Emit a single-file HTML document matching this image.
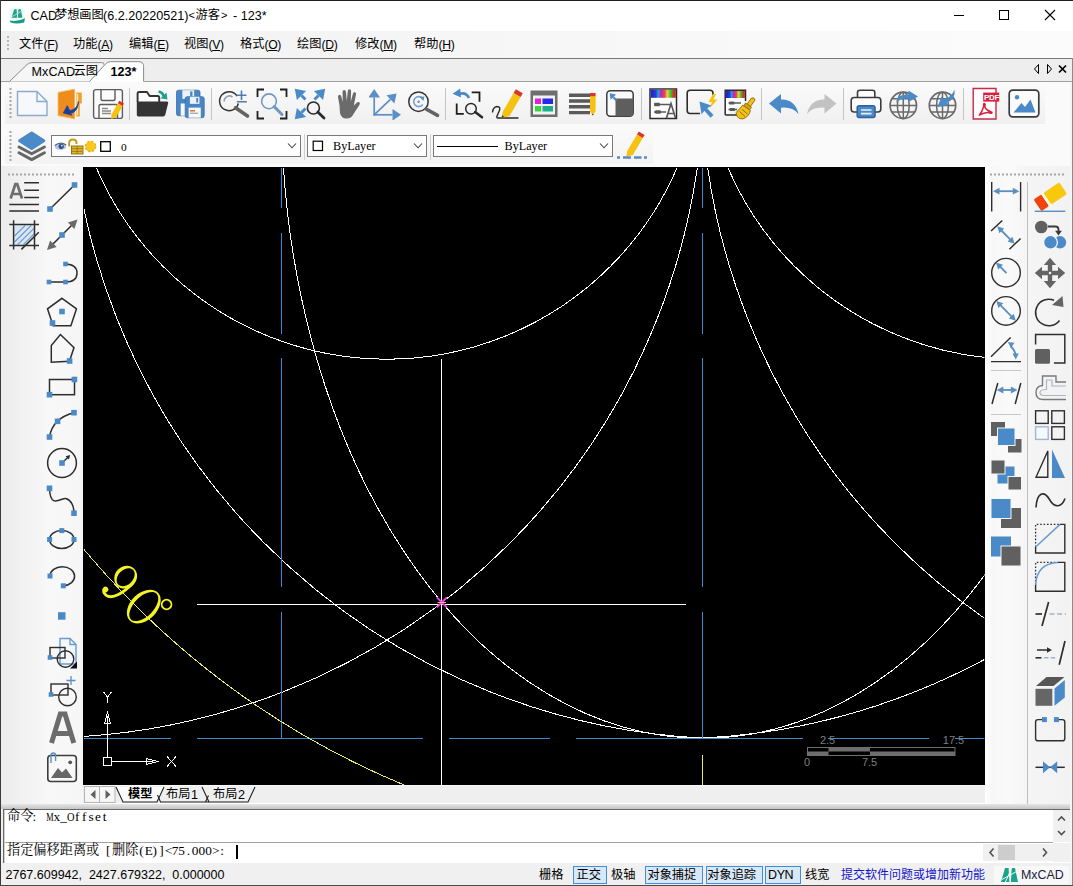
<!DOCTYPE html>
<html><head><meta charset="utf-8"><title>CAD</title><style>
html,body{margin:0;padding:0;}
body{width:1073px;height:886px;overflow:hidden;background:#f0f0f0;position:relative;font-family:"Liberation Sans",sans-serif;}
.b{position:absolute;display:block;}
.t{position:absolute;white-space:pre;}
.z{color:#000;line-height:1;margin-top:1px;pointer-events:none;font-family:"Liberation Sans","Noto Sans CJK SC",sans-serif;}
.zs{font-family:"Liberation Serif","Noto Serif CJK SC",serif;}
</style></head>
<body>
<div class="b" style="left:0px;top:0px;width:1073px;height:886px;background:#f0f0f0;"></div>
<div class="b" style="left:0px;top:0px;width:1073px;height:31px;background:#ffffff;"></div>
<div class="b" style="left:0px;top:31px;width:1073px;height:27px;background:linear-gradient(to right,#f0f0f0,#f6f6f6 40%,#fbfbfb);"></div>
<div class="b" style="left:1px;top:58px;width:1072px;height:1px;background:#787878;"></div>
<div class="b" style="left:1px;top:59px;width:1071px;height:22px;background:#eeeeee;"></div>
<div class="b" style="left:1px;top:81px;width:1071px;height:1px;background:#a0a0a0;"></div>
<div class="b" style="left:1px;top:82px;width:1071px;height:84px;background:#f5f5f5;"></div>
<svg class="b" style="left:83px;top:167px;background:#000;overflow:hidden;" width="901.5" height="618" viewBox="0 0 901.5 618"><clipPath id="cv"><rect x="1" y="1" width="900.5" height="617"/></clipPath><g clip-path="url(#cv)"><circle cx="303.7" cy="-123.7" r="315.9" stroke="#ffffff" stroke-width="1" fill="none" shape-rendering="crispEdges"/><circle cx="935.3" cy="-123.7" r="315.9" stroke="#ffffff" stroke-width="1" fill="none" shape-rendering="crispEdges"/><clipPath id="cl"><rect x="0" y="0" width="619.5" height="618"/></clipPath><clipPath id="cr"><rect x="619.5" y="0" width="282.0" height="618"/></clipPath><g clip-path="url(#cl)"><circle cx="-42.5" cy="-92.5" r="663.3" stroke="#ffffff" stroke-width="1" fill="none" shape-rendering="crispEdges"/><circle cx="653.1" cy="-94.3" r="666.2" stroke="#ffffff" stroke-width="1" fill="none" shape-rendering="crispEdges"/></g><g clip-path="url(#cr)"><circle cx="1281.5" cy="-92.5" r="663.3" stroke="#ffffff" stroke-width="1" fill="none" shape-rendering="crispEdges"/><circle cx="585.9" cy="-94.3" r="666.2" stroke="#ffffff" stroke-width="1" fill="none" shape-rendering="crispEdges"/></g><ellipse cx="619.5" cy="-62.2" rx="421.1" ry="633.5" stroke="#ffffff" stroke-width="1" fill="none" shape-rendering="crispEdges"/><path d="M358.5,192.0 L358.5,619.0 M113.5,437.3 L603.0,437.3" stroke="#ffffff" stroke-width="1" fill="none" shape-rendering="crispEdges"/><path d="M198.6,-7.0 L198.6,40.5" stroke="#3a8ad4" stroke-width="1" fill="none" shape-rendering="crispEdges"/><path d="M198.6,65.7 L198.6,167.2" stroke="#3a8ad4" stroke-width="1" fill="none" shape-rendering="crispEdges"/><path d="M198.6,191.4 L198.6,420.2" stroke="#3a8ad4" stroke-width="1" fill="none" shape-rendering="crispEdges"/><path d="M198.6,445.0 L198.6,571.3" stroke="#3a8ad4" stroke-width="1" fill="none" shape-rendering="crispEdges"/><path d="M619.5,-7.0 L619.5,40.5" stroke="#3a8ad4" stroke-width="1" fill="none" shape-rendering="crispEdges"/><path d="M619.5,65.7 L619.5,167.2" stroke="#3a8ad4" stroke-width="1" fill="none" shape-rendering="crispEdges"/><path d="M619.5,191.4 L619.5,420.2" stroke="#3a8ad4" stroke-width="1" fill="none" shape-rendering="crispEdges"/><path d="M619.5,445.0 L619.5,571.3" stroke="#3a8ad4" stroke-width="1" fill="none" shape-rendering="crispEdges"/><path d="M-3.0,571.3 L88.0,571.3" stroke="#3a8ad4" stroke-width="1" fill="none" shape-rendering="crispEdges"/><path d="M113.5,571.3 L340.4,571.3" stroke="#3a8ad4" stroke-width="1" fill="none" shape-rendering="crispEdges"/><path d="M365.8,571.3 L467.0,571.3" stroke="#3a8ad4" stroke-width="1" fill="none" shape-rendering="crispEdges"/><path d="M492.7,571.3 L719.6,571.3" stroke="#3a8ad4" stroke-width="1" fill="none" shape-rendering="crispEdges"/><path d="M745.0,571.3 L846.0,571.3" stroke="#3a8ad4" stroke-width="1" fill="none" shape-rendering="crispEdges"/><path d="M871.6,571.3 L907.0,571.3" stroke="#3a8ad4" stroke-width="1" fill="none" shape-rendering="crispEdges"/><path d="M619.5,588.0 L619.5,619.0" stroke="#ecec50" stroke-width="1" shape-rendering="crispEdges"/><circle cx="640.7" cy="-151.6" r="833.3" stroke="#ecec70" stroke-width="1" fill="none" shape-rendering="crispEdges"/><g transform="translate(60.8,439.6) rotate(45)" fill="none" stroke="#f4f424"><path fill-rule="evenodd" fill="#f4f424" stroke="none" d="M0,-19.8 C8,-19.8 13.4,-10 13.4,0 C13.4,10 8,19.8 0,19.8 C-8,19.8 -13.4,10 -13.4,0 C-13.4,-10 -8,-19.8 0,-19.8 Z M0,-18.1 C-5.4,-18.1 -9.8,-9.5 -9.8,0 C-9.8,9.5 -5.4,18.1 0,18.1 C5.4,18.1 9.8,9.5 9.8,0 C9.8,-9.5 5.4,-18.1 0,-18.1 Z"/><path fill-rule="evenodd" fill="#f4f424" stroke="none" d="M-33.6,-20 C-27.5,-20 -22.8,-14.5 -22.8,-8 C-22.8,-1.5 -27.5,4 -33.6,4 C-39.7,4 -44.4,-1.5 -44.4,-8 C-44.4,-14.5 -39.7,-20 -33.6,-20 Z M-33.6,-18.4 C-37.6,-18.4 -41,-13.8 -41,-8 C-41,-2.2 -37.6,2.4 -33.6,2.4 C-29.6,2.4 -26.2,-2.2 -26.2,-8 C-26.2,-13.8 -29.6,-18.4 -33.6,-18.4 Z"/><path d="M-24.2,-8 C-24,4 -27,17.5 -34.5,18.6 C-38,19 -40.5,17.5 -40.2,15.2" stroke-width="2.9" stroke-linecap="round"/><circle cx="-39.2" cy="15" r="2.8" fill="#f4f424" stroke="none"/><circle cx="14.6" cy="-17.6" r="4.8" stroke-width="1.9"/></g><path d="M353.8,430.4 L363.8,440.4 M363.8,430.4 L353.8,440.4" stroke="#f03ce0" stroke-width="2"/><path d="M354.5,435.5 L363.0,435.5" stroke="#f0b080" stroke-width="1"/><rect x="20.5" y="590.5" width="8" height="8" stroke="#ffffff" stroke-width="1" fill="none" shape-rendering="crispEdges"/><path d="M24.5,590.5 L24.5,556.0 M28.5,594.5 L63.0,594.5" stroke="#ffffff" stroke-width="1" fill="none" shape-rendering="crispEdges"/><path d="M24.5,545.5 L21.5,556.5 L27.5,556.5 Z M24.5,549.0 L24.5,556.0" stroke="#ffffff" stroke-width="1" fill="none" shape-rendering="crispEdges"/><path d="M74.5,594.5 L63.0,591.5 L63.0,597.5 Z M70.0,594.5 L63.0,594.5" stroke="#ffffff" stroke-width="1" fill="none" shape-rendering="crispEdges"/><path d="M20.5,525.0 L24.5,530.0 L28.5,525.0 M24.5,530.0 L24.5,536.0" stroke="#ffffff" stroke-width="1" fill="none" shape-rendering="crispEdges"/><path d="M84.0,589.5 L93.0,599.5 M93.0,589.5 L84.0,599.5" stroke="#ffffff" stroke-width="1" fill="none" shape-rendering="crispEdges"/><rect x="724" y="580" width="148.5" height="9" fill="#6e6e6e"/><rect x="725" y="581" width="20.5" height="3.5" fill="#000"/><rect x="745.5" y="584.5" width="41.5" height="3.5" fill="#000"/><rect x="787" y="581" width="84.5" height="3.5" fill="#000"/><text x="744.6" y="577.0" font-family="Liberation Sans" font-size="11" fill="#7e7e7e" text-anchor="middle">2.5</text><text x="870.5" y="577.0" font-family="Liberation Sans" font-size="11" fill="#7e7e7e" text-anchor="middle">17.5</text><text x="724.0" y="599.3" font-family="Liberation Sans" font-size="11" fill="#7e7e7e" text-anchor="middle">0</text><text x="786.6" y="599.3" font-family="Liberation Sans" font-size="11" fill="#7e7e7e" text-anchor="middle">7.5</text></g></svg>
<div class="b" style="left:0px;top:0px;width:1073px;height:1px;background:#1f1f1f;"></div>
<div class="b" style="left:0px;top:0px;width:1px;height:886px;background:#3a3a3a;"></div>
<div class="b" style="left:1072px;top:58px;width:1px;height:828px;background:#8c8c8c;"></div>
<div class="b" style="left:1070px;top:82px;width:2px;height:803px;background:#f4f4f4;"></div>
<div class="b" style="left:0px;top:885px;width:1073px;height:1px;background:#4a4a4a;"></div>
<svg class="b" style="left:8px;top:7px;" width="18" height="17" viewBox="0 0 18 17"><rect x="1.5" y="0.8" width="15" height="12.5" rx="3" fill="#e9faf6"/><path d="M3.6,10.8 L6.2,2.2 L8.6,2.2 L9.2,10.8 Z M9.9,10.8 L10.4,2.2 L12.8,2.2 L14.4,10.8 Z" fill="#22a08a"/>
<path d="M4.2,9.6 L13.2,4.4" stroke="#a8efe0" stroke-width="0.9"/>
<path d="M1.6,13.6 Q9,15.2 17,11.2 L16.2,15.4 Q9,17.4 2.6,15.6 Z" fill="#1d9a84"/></svg>
<div class="t" style="left:30.5px;top:8.6px;font:normal 12.6px/15px 'Liberation Sans';color:#000;letter-spacing:0px;">CAD</div>
<div class="t z" style="left:55px;top:7.9px;font-size:12.2px">梦想画图</div>
<div class="t" style="left:103px;top:8.6px;font:normal 12.6px/15px 'Liberation Sans';color:#000;letter-spacing:0px;">(6.2.20220521)</div>
<div class="t" style="left:188.5px;top:8.5px;font:normal 11px/13px 'Liberation Sans';color:#000;letter-spacing:0px;">&lt;</div>
<div class="t z" style="left:195.5px;top:7.9px;font-size:12.2px">游客</div>
<div class="t" style="left:221px;top:8.5px;font:normal 11px/13px 'Liberation Sans';color:#000;letter-spacing:0px;">&gt;</div>
<div class="t" style="left:233px;top:8.6px;font:normal 12.6px/15px 'Liberation Sans';color:#000;letter-spacing:0px;">- 123*</div>
<svg class="b" style="left:950px;top:5px;" width="120" height="22" viewBox="0 0 120 22"><path d="M4,10.5 h10" stroke="#000" stroke-width="1"/>
<rect x="49.5" y="5.5" width="9" height="9" fill="none" stroke="#000" stroke-width="1"/>
<path d="M95,5 l10,10 M105,5 l-10,10" stroke="#000" stroke-width="1.1"/></svg>
<svg class="b" style="left:6px;top:34px;" width="5" height="20" viewBox="0 0 5 20"><rect x="1" y="2" width="2" height="2" fill="#b4b4b4"/><rect x="1" y="6" width="2" height="2" fill="#b4b4b4"/><rect x="1" y="10" width="2" height="2" fill="#b4b4b4"/><rect x="1" y="14" width="2" height="2" fill="#b4b4b4"/></svg>
<div class="t z" style="left:19px;top:37.1px;font-size:12.2px">文件</div>
<div class="t" style="left:43.6px;top:37.6px;font:normal 12.2px/15px 'Liberation Sans';color:#000;letter-spacing:-0.4px;">(<u>F</u>)</div>
<div class="t z" style="left:73px;top:37.1px;font-size:12.2px">功能</div>
<div class="t" style="left:97.60000000000001px;top:37.6px;font:normal 12.2px/15px 'Liberation Sans';color:#000;letter-spacing:-0.4px;">(<u>A</u>)</div>
<div class="t z" style="left:129px;top:37.1px;font-size:12.2px">编辑</div>
<div class="t" style="left:153.59999999999997px;top:37.6px;font:normal 12.2px/15px 'Liberation Sans';color:#000;letter-spacing:-0.4px;">(<u>E</u>)</div>
<div class="t z" style="left:184px;top:37.1px;font-size:12.2px">视图</div>
<div class="t" style="left:208.59999999999997px;top:37.6px;font:normal 12.2px/15px 'Liberation Sans';color:#000;letter-spacing:-0.4px;">(<u>V</u>)</div>
<div class="t z" style="left:240px;top:37.1px;font-size:12.2px">格式</div>
<div class="t" style="left:264.59999999999997px;top:37.6px;font:normal 12.2px/15px 'Liberation Sans';color:#000;letter-spacing:-0.4px;">(<u>O</u>)</div>
<div class="t z" style="left:297px;top:37.1px;font-size:12.2px">绘图</div>
<div class="t" style="left:321.59999999999997px;top:37.6px;font:normal 12.2px/15px 'Liberation Sans';color:#000;letter-spacing:-0.4px;">(<u>D</u>)</div>
<div class="t z" style="left:355px;top:37.1px;font-size:12.2px">修改</div>
<div class="t" style="left:379.59999999999997px;top:37.6px;font:normal 12.2px/15px 'Liberation Sans';color:#000;letter-spacing:-0.4px;">(<u>M</u>)</div>
<div class="t z" style="left:414px;top:37.1px;font-size:12.2px">帮助</div>
<div class="t" style="left:438.59999999999997px;top:37.6px;font:normal 12.2px/15px 'Liberation Sans';color:#000;letter-spacing:-0.4px;">(<u>H</u>)</div>
<svg class="b" style="left:0px;top:58px;" width="200" height="26" viewBox="0 0 200 26"><path d="M9.5,23.5 L27,6.6 Q29,4.6 32,4.6 L101.5,4.6 Q105,4.6 103.4,7 L89.5,23.5 Z" fill="#f6f6f6"/>
<path d="M9.5,23.5 L27,6.6 Q29,4.6 32,4.6 L101.5,4.6 Q105,4.6 103.6,6.6" fill="none" stroke="#8c8c8c" stroke-width="1"/>
<path d="M89.5,24 L105.5,6 Q107.5,3.7 110.5,3.7 L138.8,3.7 Q143.6,3.7 143.6,8.5 L143.6,24 Z" fill="#ffffff"/>
<path d="M89.5,23.5 L105.5,6 Q107.5,3.7 110.5,3.7 L138.8,3.7 Q143.6,3.7 143.6,8.5 L143.6,23.5" fill="none" stroke="#8c8c8c" stroke-width="1"/></svg>
<div class="t" style="left:31.6px;top:64.7px;font:normal 12.6px/15px 'Liberation Sans';color:#000;letter-spacing:0px;">MxCAD</div>
<div class="t z" style="left:73.6px;top:64.0px;font-size:12.2px">云图</div>
<div class="t" style="left:110.6px;top:64.7px;font:bold 12.6px/15px 'Liberation Sans';color:#000;letter-spacing:0px;">123*</div>
<svg class="b" style="left:1028px;top:62px;" width="44" height="14" viewBox="0 0 44 14"><path d="M10.5,2.5 L6.5,7 L10.5,11.5 Z" fill="none" stroke="#000" stroke-width="1"/>
<path d="M19.5,2.5 L23.5,7 L19.5,11.5 Z" fill="none" stroke="#000" stroke-width="1"/>
<path d="M31,3.5 l7,7 M38,3.5 l-7,7" stroke="#000" stroke-width="1.7"/></svg>
<div class="b" style="left:83px;top:785px;width:902px;height:19px;background:#efefef;"></div>
<div class="b" style="left:83px;top:785px;width:902px;height:1px;background:#f8f8f8;"></div>
<div class="b" style="left:985px;top:786px;width:8px;height:18px;background:#ffffff;"></div>
<svg class="b" style="left:84px;top:786px;" width="180" height="18" viewBox="0 0 180 18"><rect x="0.5" y="0.5" width="15" height="16" fill="#f6f6f6" stroke="#b4b4b4"/>
<rect x="15.5" y="0.5" width="15.5" height="16" fill="#f6f6f6" stroke="#b4b4b4"/>
<path d="M11.5,4 L6.5,8.5 L11.5,13 Z" fill="#606060"/>
<path d="M21.5,4 L26.5,8.5 L21.5,13 Z" fill="#606060"/>
<path d="M32,1 L39,16 L73,16 L80,1 Z" fill="#fafafa" stroke="none"/>
<path d="M32,1 L39,16 L73,16 L80,1" fill="none" stroke="#202020" stroke-width="1.1"/>
<path d="M73.5,9 L76.5,16 L121,16" fill="none" stroke="#202020" stroke-width="1.1"/>
<path d="M118,1 L125,16 L164,16 L171,1" fill="none" stroke="#202020" stroke-width="1.1"/>
<path d="M125,16 L121.5,16 L124.5,9.5" fill="none" stroke="#202020" stroke-width="1.1"/></svg>
<div class="t z" style="left:128px;top:787.0px;font-size:12.2px;font-weight:bold">模型</div>
<div class="t z" style="left:166px;top:787.0px;font-size:12.2px">布局</div>
<div class="t" style="left:190.89999999999998px;top:787.5px;font:normal 12.6px/15px 'Liberation Sans';color:#000;letter-spacing:0px;">1</div>
<div class="t z" style="left:213px;top:787.0px;font-size:12.2px">布局</div>
<div class="t" style="left:237.89999999999998px;top:787.5px;font:normal 12.6px/15px 'Liberation Sans';color:#000;letter-spacing:0px;">2</div>
<div class="b" style="left:1px;top:804px;width:1069px;height:5px;background:linear-gradient(#e6e6e6,#c4c4c4);"></div>
<div class="b" style="left:1px;top:803px;width:1069px;height:1px;background:#ffffff;"></div>
<div class="b" style="left:3px;top:809px;width:1067px;height:1px;background:#696969;"></div>
<div class="b" style="left:3px;top:809px;width:1px;height:54px;background:#696969;"></div>
<div class="b" style="left:4px;top:810px;width:1066px;height:53px;background:#ffffff;"></div>
<div class="b" style="left:4px;top:842px;width:1049px;height:1px;background:#a0a0a0;"></div>
<div class="b" style="left:4px;top:810px;width:1px;height:53px;background:#d0d0d0;"></div>
<div class="b" style="left:1053px;top:810px;width:17px;height:32px;background:#f0f0f0;"></div>
<svg class="b" style="left:1053px;top:810px;" width="17" height="32" viewBox="0 0 17 32"><path d="M5,10.5 l3.5,-3.5 l3.5,3.5 M5,21 l3.5,3.5 l3.5,-3.5" fill="none" stroke="#505050" stroke-width="1.6"/></svg>
<div class="b" style="left:983px;top:844px;width:70px;height:17px;background:#f0f0f0;"></div>
<div class="b" style="left:998px;top:845px;width:17px;height:15px;background:#cdcdcd;"></div>
<svg class="b" style="left:983px;top:844px;" width="70" height="17" viewBox="0 0 70 17"><path d="M10.5,4.5 l-3.5,4 l3.5,4 M60,4.5 l3.5,4 l-3.5,4" fill="none" stroke="#505050" stroke-width="1.6"/></svg>
<div class="b" style="left:1053px;top:843px;width:17px;height:19px;background:#f0f0f0;"></div>
<div class="t z zs" style="left:7px;top:808.3px;font-size:13.2px">命令</div>
<div class="t" style="left:31px;top:809.2px;font:13.3px/16px 'Liberation Serif';color:#000"><span style="display:inline-block;width:6.67px;text-align:center">:</span></div>
<div class="t" style="left:46.5px;top:809.2px;font:13.3px/16px 'Liberation Serif';color:#000"><span style="display:inline-block;width:6.85px;text-align:center"><span style="display:inline-block;transform:scaleX(0.62);transform-origin:50% 50%;margin:0 -3px">M</span></span><span style="display:inline-block;width:6.85px;text-align:center">x</span><span style="display:inline-block;width:6.85px;text-align:center">_</span><span style="display:inline-block;width:6.85px;text-align:center"><span style="display:inline-block;transform:scaleX(0.78);transform-origin:50% 50%;margin:0 -3px">O</span></span><span style="display:inline-block;width:6.85px;text-align:center">f</span><span style="display:inline-block;width:6.85px;text-align:center">f</span><span style="display:inline-block;width:6.85px;text-align:center">s</span><span style="display:inline-block;width:6.85px;text-align:center">e</span><span style="display:inline-block;width:6.85px;text-align:center">t</span></div>
<div class="t z zs" style="left:7px;top:842.3px;font-size:13.2px">指定偏移距离或</div>
<div class="t" style="left:105px;top:843.2px;font:13.3px/16px 'Liberation Serif';color:#000"><span style="display:inline-block;width:6.67px;text-align:center">[</span></div>
<div class="t z zs" style="left:112px;top:842.3px;font-size:13.2px">删除</div>
<div class="t" style="left:138px;top:843.2px;font:13.3px/16px 'Liberation Serif';color:#000"><span style="display:inline-block;width:6.72px;text-align:center">(</span><span style="display:inline-block;width:6.72px;text-align:center">E</span><span style="display:inline-block;width:6.72px;text-align:center">)</span><span style="display:inline-block;width:6.72px;text-align:center">]</span><span style="display:inline-block;width:6.72px;text-align:center">&lt;</span><span style="display:inline-block;width:6.72px;text-align:center">7</span><span style="display:inline-block;width:6.72px;text-align:center">5</span><span style="display:inline-block;width:6.72px;text-align:center">.</span><span style="display:inline-block;width:6.72px;text-align:center">0</span><span style="display:inline-block;width:6.72px;text-align:center">0</span><span style="display:inline-block;width:6.72px;text-align:center">0</span><span style="display:inline-block;width:6.72px;text-align:center">&gt;</span><span style="display:inline-block;width:6.72px;text-align:center">:</span></div>
<div class="b" style="left:236px;top:845px;width:2px;height:14px;background:#000;"></div>
<div class="b" style="left:1px;top:863px;width:1069px;height:22px;background:#f0f0f0;"></div>
<div class="t" style="left:5.5px;top:867.5px;font:normal 12.5px/15px 'Liberation Sans';color:#000;letter-spacing:0px;">2767.609942,  2427.679322,  0.000000</div>
<div class="t z" style="left:539px;top:867.6px;font-size:12.2px">栅格</div>
<div class="b" style="left:573.3px;top:866px;width:33.6px;height:17.5px;background:#d9e8f7;border:1px solid #3d8fdc;box-sizing:border-box;"></div>
<div class="t z" style="left:576.5px;top:867.6px;font-size:12.2px">正交</div>
<div class="t z" style="left:611px;top:867.6px;font-size:12.2px">极轴</div>
<div class="b" style="left:644.6px;top:866px;width:58.7px;height:17.5px;background:#d9e8f7;border:1px solid #3d8fdc;box-sizing:border-box;"></div>
<div class="t z" style="left:647.5px;top:867.6px;font-size:12.2px">对象捕捉</div>
<div class="b" style="left:705.5px;top:866px;width:57px;height:17.5px;background:#d9e8f7;border:1px solid #3d8fdc;box-sizing:border-box;"></div>
<div class="t z" style="left:707.3px;top:867.6px;font-size:12.2px">对象追踪</div>
<div class="b" style="left:765.2px;top:866px;width:35.5px;height:17.5px;background:#d9e8f7;border:1px solid #3d8fdc;box-sizing:border-box;"></div>
<div class="t" style="left:768px;top:867.6px;font:normal 12.5px/15px 'Liberation Sans';color:#000;letter-spacing:-0.4px;">DYN</div>
<div class="t z" style="left:805px;top:867.6px;font-size:12.2px">线宽</div>
<div class="t z" style="left:841px;top:867.8px;font-size:12.0px;color:#1414c8">提交软件问题或增加新功能</div>
<div class="b" style="left:994px;top:866px;width:75px;height:18px;background:#f8f8f8;"></div>
<svg class="b" style="left:1000px;top:866px;" width="20" height="18" viewBox="0 0 20 18"><path d="M1,16 L5,2 L8.6,2 L9.4,16 Z M11,16 L11.6,2 L15,2 L18,16 Z" fill="#1aa38a"/>
<path d="M2,13.5 L17.5,5 M5,17 L12,1" stroke="#e8fbf6" stroke-width="1"/></svg>
<div class="t" style="left:1021px;top:867.8px;font:normal 12.4px/15px 'Liberation Sans';color:#1c1c3c;letter-spacing:0px;">MxCAD</div>
<div class="b" style="left:1px;top:82px;width:1069px;height:85px;background:#fafafa;"></div>
<div class="b" style="left:5px;top:84px;width:1040px;height:40px;background:linear-gradient(#fafafa,#f0f0f0);"></div>
<div class="b" style="left:5px;top:126px;width:648px;height:38px;background:linear-gradient(#fafafa,#f3f3f3);"></div>
<svg class="b" style="left:9px;top:88px;" width="3" height="32" viewBox="0 0 3 32"><rect x="0.5" y="0" width="2" height="2" fill="#a6a6a6"/><rect x="0.5" y="4" width="2" height="2" fill="#a6a6a6"/><rect x="0.5" y="8" width="2" height="2" fill="#a6a6a6"/><rect x="0.5" y="12" width="2" height="2" fill="#a6a6a6"/><rect x="0.5" y="16" width="2" height="2" fill="#a6a6a6"/><rect x="0.5" y="20" width="2" height="2" fill="#a6a6a6"/><rect x="0.5" y="24" width="2" height="2" fill="#a6a6a6"/><rect x="0.5" y="28" width="2" height="2" fill="#a6a6a6"/></svg>
<svg class="b" style="left:9px;top:131px;" width="3" height="32" viewBox="0 0 3 32"><rect x="0.5" y="0" width="2" height="2" fill="#a6a6a6"/><rect x="0.5" y="4" width="2" height="2" fill="#a6a6a6"/><rect x="0.5" y="8" width="2" height="2" fill="#a6a6a6"/><rect x="0.5" y="12" width="2" height="2" fill="#a6a6a6"/><rect x="0.5" y="16" width="2" height="2" fill="#a6a6a6"/><rect x="0.5" y="20" width="2" height="2" fill="#a6a6a6"/><rect x="0.5" y="24" width="2" height="2" fill="#a6a6a6"/><rect x="0.5" y="28" width="2" height="2" fill="#a6a6a6"/></svg>
<svg class="b" style="left:16px;top:90px;" width="33" height="28" viewBox="0 0 33 28"><path d="M1.5,1.5 H21 L31,11.5 V25.5 H1.5 Z" fill="#f6f8fb" stroke="#8aaad0" stroke-width="1.4" stroke-linejoin="round"/><path d="M21,1.5 V11.5 H31" fill="none" stroke="#8aaad0" stroke-width="1.4"/></svg>
<svg class="b" style="left:57px;top:88px;" width="28" height="32" viewBox="0 0 28 32"><path d="M1.1,4.4 L17.6,1.2 V30.8 L1.1,27.6 Z" fill="#ee8d1c" stroke="#f2b24c" stroke-width="0.8"/>
<path d="M19.4,4.6 H24.8 V15.4 H22.8 V28.5 H19.4 Z" fill="#f0a22e"/><path d="M20.6,6 V27" stroke="#fdeccb" stroke-width="1"/>
<path d="M21.4,13.4 C20.8,19 17,22 12.6,22.6 L10.3,17.7 L6.3,25 L14.9,27.2 L13.3,25.4 C18.5,24.6 21.2,20 21.4,13.4 Z" fill="#1a3f9f" stroke="#1a3f9f" stroke-width="0.8" stroke-linejoin="round"/></svg>
<svg class="b" style="left:92px;top:88px;" width="33" height="32" viewBox="0 0 33 32"><rect x="1.6" y="1.6" width="28.8" height="28.8" rx="2.2" fill="#fbfbfb" stroke="#5c5c5c" stroke-width="1.4"/>
<path d="M9,1.6 V11 Q9,12.5 10.5,12.5 H21.5 Q23,12.5 23,11 V1.6" fill="none" stroke="#5c5c5c" stroke-width="1.4"/>
<path d="M7,30.4 V18 Q7,16.5 8.5,16.5 H24 Q25.5,16.5 25.5,18 V30.4" fill="none" stroke="#5c5c5c" stroke-width="1.4"/>
<path d="M10,20.5 H16 M10,23 H19 M10,25.5 H19" stroke="#8a8a8a" stroke-width="1.3"/>
<path d="M25.8,15.2 L30.6,18 L24,29.6 L19.4,30.8 L19.4,26.6 Z" fill="#f5c211"/><path d="M25.8,15.2 L27.2,12.8 L32,15.6 L30.6,18 Z" fill="#d9362b"/></svg>
<div class="b" style="left:129px;top:88px;width:1px;height:32px;background:#c4c4c4;"></div>
<svg class="b" style="left:135px;top:89px;" width="35" height="30" viewBox="0 0 35 30"><path d="M2.6,13 V4.6 Q2.6,3 4.2,3 H12 L14.6,7 H22.6 Q24.2,7 24.2,8.6 V13" fill="#fdfdfd" stroke="#333" stroke-width="1.9" stroke-linejoin="round"/>
<path d="M1.8,12.4 H32 Q33.6,12.4 33.2,14 L30.2,26 Q29.8,27.4 28.2,27.4 H3.4 Q1.8,27.4 1.8,25.8 Z" fill="#343434"/>
<path d="M23.6,2.6 Q27.6,3.4 28.8,7.2" fill="none" stroke="#1fa08c" stroke-width="2.6"/><path d="M25.4,9.2 L32.4,10.4 L31.6,3.4 Z" fill="#1fa08c"/></svg>
<svg class="b" style="left:175px;top:89px;" width="32" height="30" viewBox="0 0 32 30"><rect x="1.5" y="1.2" width="23.5" height="25.5" rx="2" fill="#4a86c5" stroke="#3a6ea8" stroke-width="0.8"/>
<rect x="7.375" y="1.2" width="11.75" height="8.67" fill="#eef3fa"/><rect x="15.129999999999999" y="2.4" width="2.35" height="5.61" fill="#4a86c5"/>
<rect x="5.7299999999999995" y="14.459999999999999" width="15.040000000000001" height="12.24" fill="#f8f8f8"/><rect x="10.2" y="7.7" width="19" height="21" rx="2" fill="#4a86c5" stroke="#3a6ea8" stroke-width="0.8"/>
<rect x="14.95" y="7.7" width="9.5" height="7.140000000000001" fill="#eef3fa"/><rect x="21.22" y="8.9" width="1.9000000000000001" height="4.62" fill="#4a86c5"/>
<rect x="13.62" y="18.62" width="12.16" height="10.08" fill="#f8f8f8"/><path d="M15,21.8 h5" stroke="#e0702f" stroke-width="1.5"/><path d="M15,24.2 h8" stroke="#9a9a9a" stroke-width="1.1"/></svg>
<div class="b" style="left:211px;top:88px;width:1px;height:32px;background:#c4c4c4;"></div>
<svg class="b" style="left:217px;top:87px;" width="34" height="33" viewBox="0 0 34 33"><path d="M20.2,9.2 A9.5,9.5 0 1 0 21.3,16.5" fill="none" stroke="#333" stroke-width="1.5"/><path d="M18.5,20.8 L30.5,29" stroke="#636363" stroke-width="3.6" stroke-linecap="round"/><path d="M7.2,14.5 A5.2,5.2 0 0 1 15.5,10" fill="none" stroke="#8ea4bc" stroke-width="1.6"/><path d="M19.5,8.2 h10 M24.5,3.4 v9.6 M19.8,14.7 h10" stroke="#4f7cae" stroke-width="1.6"/></svg>
<svg class="b" style="left:256px;top:88px;" width="33" height="32" viewBox="0 0 33 32"><path d="M1.5,9 V1.5 H8 M24,1.5 H30.5 V9 M30.5,23 V30.5 H24 M8,30.5 H1.5 V23" fill="none" stroke="#1e1e1e" stroke-width="1.8"/><circle cx="13" cy="13.3" r="7.4" fill="none" stroke="#6f98c8" stroke-width="1.6"/><path d="M18.2,18.6 L26,26.5" stroke="#6f98c8" stroke-width="3.0" stroke-linecap="round"/></svg>
<svg class="b" style="left:294px;top:88px;" width="33" height="32" viewBox="0 0 33 32"><path d="M11.5,11.5 L7.5,7.5" stroke="#4a8ac8" stroke-width="3"/><path d="M0.8,0.8 L12.1,2.9 L2.9,12.1 Z" fill="#4a8ac8"/><path d="M20.5,11.5 L24.5,7.5" stroke="#4a8ac8" stroke-width="3"/><path d="M31.2,0.8 L29.1,12.1 L19.9,2.9 Z" fill="#4a8ac8"/><path d="M11.5,20.5 L7.5,24.5" stroke="#4a8ac8" stroke-width="3"/><path d="M0.8,31.2 L2.9,19.9 L12.1,29.1 Z" fill="#4a8ac8"/><circle cx="19.4" cy="20" r="6" fill="none" stroke="#2a2a2a" stroke-width="1.6"/><path d="M23.8,24.1 L30,30" stroke="#2a2a2a" stroke-width="2.8" stroke-linecap="round"/></svg>
<svg class="b" style="left:335px;top:88px;" width="26" height="32" viewBox="0 0 26 32"><path d="M4.5,17.5 L3,9 Q2.8,7 4.4,6.8 Q5.8,6.7 6.3,8.5 L7.8,14 L7.5,4 Q7.5,2 9.2,2 Q10.8,2 11,4 L11.8,13 L12.8,2.8 Q13,1 14.7,1.2 Q16.2,1.4 16.1,3.2 L15.8,13.5 L18,5.5 Q18.6,3.8 20,4.3 Q21.4,4.8 21,6.6 L18.8,17.5 L22,14.6 Q23.6,13.4 24.6,14.6 Q25.4,15.8 24.2,17.2 L18.5,26 Q16.5,30.5 11.5,30.5 Q6.2,30.5 5,25 Z" fill="#6b6b6b"/></svg>
<svg class="b" style="left:369px;top:88px;" width="33" height="32" viewBox="0 0 33 32"><path d="M5.2,27.6 L5.2,9.5" stroke="#5a8fc8" stroke-width="1.7"/><path d="M5.2,1 L11.0,9.5 L-0.6,9.5 Z" fill="#5a8fc8"/><path d="M4.4,26.8 L23.5,26.8" stroke="#5a8fc8" stroke-width="1.7"/><path d="M32,26.8 L23.5,32.6 L23.5,21.0 Z" fill="#5a8fc8"/><path d="M5.2,26.8 L21.4,11.4" stroke="#5a8fc8" stroke-width="1.7"/><path d="M27.6,5.6 L25.4,15.6 L17.5,7.2 Z" fill="#5a8fc8"/></svg>
<svg class="b" style="left:407px;top:88px;" width="34" height="32" viewBox="0 0 34 32"><circle cx="11.5" cy="13.7" r="9.7" fill="none" stroke="#333" stroke-width="1.5"/><path d="M19,21 L30.5,27.3" stroke="#636363" stroke-width="3.6" stroke-linecap="round"/><path d="M15.8,16.5 A5,5 0 1 1 15.6,10.4" fill="none" stroke="#7fa0c6" stroke-width="1.6"/><path d="M12.6,9 L17.4,8.4 L16.4,13 Z" fill="#5a8fc8"/><circle cx="11.6" cy="13.7" r="1.2" fill="#5a8fc8"/></svg>
<div class="b" style="left:445px;top:88px;width:1px;height:32px;background:#c4c4c4;"></div>
<svg class="b" style="left:452px;top:88px;" width="33" height="32" viewBox="0 0 33 32"><path d="M19.7,4.4 H27.5 V13.7 M11.8,25.8 H4.7 V15.6" fill="none" stroke="#1e1e1e" stroke-width="1.8"/><circle cx="19" cy="20.8" r="5.3" fill="none" stroke="#2a2a2a" stroke-width="1.5"/><path d="M23.2,24.0 L30,29.2" stroke="#2a2a2a" stroke-width="2.6" stroke-linecap="round"/><path d="M16.9,10 Q14.5,3.8 7,5.8" fill="none" stroke="#4a8ac8" stroke-width="2.8"/><path d="M0.6,5.7 L8.2,0.4 L9,9.6 Z" fill="#4a8ac8"/></svg>
<svg class="b" style="left:491px;top:87px;" width="32" height="33" viewBox="0 0 32 33"><path d="M1.5,25.5 Q2,20 6,19.5 Q10,19.5 8.2,24 Q6.5,28 5.8,29.6 Q5.6,31.3 8,31 H27.5" fill="none" stroke="#2a2a2a" stroke-width="1.4"/>
<path d="M22.6,6 L29.6,10 L18.6,29 L10.6,31 L11.6,25 Z" fill="#f5c211"/><path d="M22.6,6 L24.8,2.2 L31.8,6.2 L29.6,10 Z" fill="#d9362b"/><path d="M10.6,31 L11.1,28 L13.6,30.2 Z" fill="#444"/></svg>
<svg class="b" style="left:530px;top:90px;" width="29" height="28" viewBox="0 0 29 28"><rect x="0.5" y="0.5" width="27" height="26.5" fill="#6e6e6e"/><rect x="3" y="5.5" width="22" height="19" fill="#f2f2f2"/>
<rect x="5" y="8.5" width="6" height="5.5" fill="#e020e0"/><rect x="12.5" y="8.5" width="10.5" height="5.5" fill="#2828e8"/>
<rect x="5" y="16" width="6" height="5.5" fill="#38d838"/><rect x="12.5" y="16" width="10.5" height="5.5" fill="#18b08a"/></svg>
<svg class="b" style="left:568px;top:90px;" width="30" height="29" viewBox="0 0 30 29"><path d="M1,5.2 H22 M1,11 H22 M1,16.8 H22 M1,22.6 H22" stroke="#5a5a5a" stroke-width="3.4"/>
<path d="M22,6 H27.6 V21 L24.8,25.6 L22,21 Z" fill="#f5c211"/><rect x="22" y="3" width="5.6" height="3.2" fill="#d9362b"/><path d="M23.8,24 L24.8,25.6 L25.8,24 Z" fill="#444"/></svg>
<svg class="b" style="left:606px;top:90px;" width="29" height="28" viewBox="0 0 29 28"><rect x="0.8" y="0.8" width="26.4" height="25.4" rx="3.5" fill="#fafafa" stroke="#3c3c3c" stroke-width="1.5"/>
<path d="M9.5,8.5 H27.2 V23 Q27.2,26.2 24,26.2 H9.5 Z" fill="#5e5e5e"/><path d="M10.5,10.5 L7.4,7.2" stroke="#4a8ac8" stroke-width="2.0"/><path d="M3.6,3.2 L10.1,4.6 L4.7,9.8 Z" fill="#4a8ac8"/></svg>
<div class="b" style="left:641px;top:88px;width:1px;height:32px;background:#c4c4c4;"></div>
<svg class="b" style="left:649px;top:88px;" width="30" height="33" viewBox="0 0 30 33"><defs><linearGradient id="rb" x1="0" x2="1"><stop offset="0" stop-color="#2020c8"/><stop offset="0.2" stop-color="#2838e0"/><stop offset="0.3" stop-color="#20a8c8"/><stop offset="0.4" stop-color="#c020c8"/><stop offset="0.55" stop-color="#e84060"/><stop offset="0.66" stop-color="#e8d820"/><stop offset="0.8" stop-color="#30c040"/><stop offset="0.92" stop-color="#d83020"/><stop offset="1" stop-color="#c02020"/></linearGradient></defs><rect x="1" y="1" width="26.5" height="29.5" fill="#fdfdfd" stroke="#2c2c2c" stroke-width="1.5"/><rect x="1.8" y="1.8" width="25" height="8" fill="url(#rb)"/>
<path d="M5,16.5 H22 M5,24 H17" stroke="#5a5a5a" stroke-width="1.5"/><rect x="5" y="14.8" width="6" height="3.4" rx="1.2" fill="#5a5a5a"/><rect x="6" y="22.3" width="6" height="3.4" rx="1.2" fill="#5a5a5a"/>
<path d="M17.5,30 L22,15.5 L26.5,30 M19,25.5 H25" fill="none" stroke="#5a5a5a" stroke-width="1.7"/></svg>
<svg class="b" style="left:686px;top:89px;" width="33" height="30" viewBox="0 0 33 30"><path d="M14,24.5 H4 Q1.2,24.5 1.2,21.5 V4 Q1.2,1.2 4,1.2 H24 Q27,1.2 27,4 V6" fill="none" stroke="#2c2c2c" stroke-width="1.6"/>
<path d="M27,5 L22.5,13 H26 L23.5,19.5 L31.5,10.5 H27.5 L30,5 Z" fill="#f5c211"/>
<path d="M13.5,12.5 L25.5,16.5 L21.2,19.2 L27.5,26 L24.5,28.8 L18.3,21.8 L15.5,25.5 Z" fill="#4a8ac8"/></svg>
<svg class="b" style="left:724px;top:89px;" width="33" height="31" viewBox="0 0 33 31"><defs><linearGradient id="rb2" x1="0" x2="1"><stop offset="0" stop-color="#2020c8"/><stop offset="0.2" stop-color="#2838e0"/><stop offset="0.3" stop-color="#20a8c8"/><stop offset="0.4" stop-color="#c020c8"/><stop offset="0.55" stop-color="#e84060"/><stop offset="0.66" stop-color="#e8d820"/><stop offset="0.8" stop-color="#30c040"/><stop offset="0.92" stop-color="#d83020"/><stop offset="1" stop-color="#c02020"/></linearGradient></defs><path d="M1.2,26 V1.2 H21.5 V12" fill="#fdfdfd" stroke="#2c2c2c" stroke-width="1.5"/><path d="M1.2,26 H13" stroke="#2c2c2c" stroke-width="1.5"/><rect x="2" y="2" width="18.8" height="7" fill="url(#rb2)"/>
<path d="M4.5,14 H17 M4.5,20.5 H13" stroke="#5a5a5a" stroke-width="1.5"/><rect x="5" y="12.4" width="5.5" height="3.2" rx="1.2" fill="#5a5a5a"/><rect x="5.5" y="18.9" width="5.5" height="3.2" rx="1.2" fill="#5a5a5a"/>
<path d="M27.5,9 Q30.5,8 31,11 L26.5,17.5 L23,15 Z" fill="#f2c118" stroke="#8a6a08" stroke-width="0.9"/>
<path d="M21.5,14 L27.5,18.2 L25.8,20.8 L19.8,16.6 Z" fill="#d9a40e" stroke="#8a6a08" stroke-width="0.8"/>
<path d="M18.8,16.2 L26.4,21.6 Q25,28 18.5,30 Q12,29.5 12.2,23.5 Z" fill="#f2c118" stroke="#8a6a08" stroke-width="0.9"/><path d="M15.5,22.5 L21,27.5 M18.2,20.4 L23.4,25" stroke="#8a6a08" stroke-width="0.9"/></svg>
<div class="b" style="left:761px;top:88px;width:1px;height:32px;background:#c4c4c4;"></div>
<svg class="b" style="left:768px;top:93px;" width="32" height="23" viewBox="0 0 32 23"><path d="M1,10.5 L13,1 V6.5 Q27,6 30.5,21 Q24,13.5 13,14.8 V20.5 Z" fill="#4a8ac8"/></svg>
<svg class="b" style="left:806px;top:93px;" width="32" height="23" viewBox="0 0 32 23"><path d="M1,10.5 L13,1 V6.5 Q27,6 30.5,21 Q24,13.5 13,14.8 V20.5 Z" fill="#c2c2c2" transform="translate(31.5,0) scale(-1,1)"/></svg>
<div class="b" style="left:843px;top:88px;width:1px;height:32px;background:#c4c4c4;"></div>
<svg class="b" style="left:850px;top:89px;" width="33" height="30" viewBox="0 0 33 30"><path d="M7.5,9 V3.5 Q7.5,1.2 9.8,1.2 H22.5 Q24.8,1.2 24.8,3.5 V9" fill="#fdfdfd" stroke="#3c3c3c" stroke-width="1.6"/>
<rect x="1.2" y="8.5" width="29.6" height="14.5" rx="3" fill="#fdfdfd" stroke="#3c3c3c" stroke-width="1.6"/>
<rect x="7.2" y="16.8" width="17.8" height="11.8" rx="2" fill="#4a8ac8" stroke="#2f5f98" stroke-width="1.5"/><path d="M11,21 H21.5 M11,24.6 H21.5" stroke="#eaf2fb" stroke-width="1.7"/></svg>
<svg class="b" style="left:888px;top:88px;" width="32" height="32" viewBox="0 0 32 32"><circle cx="15.3" cy="17.4" r="13.2" fill="#f4f4f4" stroke="#6a6a6a" stroke-width="1.7"/>
<ellipse cx="15.3" cy="17.4" rx="5.9399999999999995" ry="13.2" fill="none" stroke="#6a6a6a" stroke-width="1.5"/>
<path d="M2.1000000000000014,17.4 H28.5 M15.3,4.199999999999999 V30.599999999999998 M3.948000000000002,10.799999999999999 H26.652 M3.948000000000002,24.0 H26.652" stroke="#6a6a6a" stroke-width="1.5"/><path d="M8,14.5 Q9,6 20.5,6.5 V2.5 L30,8.5 L20.5,14 V10.5 Q13,10 8,14.5 Z" fill="#4a8ac8"/></svg>
<svg class="b" style="left:927px;top:88px;" width="32" height="32" viewBox="0 0 32 32"><circle cx="15.5" cy="17.4" r="13.2" fill="#f4f4f4" stroke="#6a6a6a" stroke-width="1.7"/>
<ellipse cx="15.5" cy="17.4" rx="5.9399999999999995" ry="13.2" fill="none" stroke="#6a6a6a" stroke-width="1.5"/>
<path d="M2.3000000000000007,17.4 H28.7 M15.5,4.199999999999999 V30.599999999999998 M4.1480000000000015,10.799999999999999 H26.851999999999997 M4.1480000000000015,24.0 H26.851999999999997" stroke="#6a6a6a" stroke-width="1.5"/><path d="M27.5,1.5 Q29,11.5 19.5,14.5 L21.8,17.2 L10.5,19 L14.5,8.5 L16.8,11.4 Q24.5,9.5 27.5,1.5 Z" fill="#4a8ac8"/></svg>
<div class="b" style="left:963px;top:88px;width:1px;height:32px;background:#c4c4c4;"></div>
<svg class="b" style="left:971px;top:87px;" width="30" height="34" viewBox="0 0 30 34"><path d="M2.2,1.5 H25 V32 H2.2 Z" fill="#fff" stroke="#c8284a" stroke-width="1.4"/>
<rect x="12.2" y="5.6" width="16" height="9" fill="#d8203c"/>
<path d="M8.2,28.2 Q11.2,24.6 12.8,19.2 Q12.2,16.4 13.4,16.4 Q14.6,16.6 13.8,20 Q15.4,23.6 19.8,24.8 Q21.6,25.2 20.8,26 Q19.6,26.6 17,25.4 Q12.6,25.6 8.2,28.2 Z" fill="none" stroke="#d8203c" stroke-width="1.5" stroke-linejoin="round"/></svg>
<div class="t" style="left:984px;top:93px;font:bold 8px/10px 'Liberation Sans';color:#fff;letter-spacing:-0.3px;">PDF</div>
<svg class="b" style="left:1008px;top:89px;" width="33" height="30" viewBox="0 0 33 30"><rect x="1.2" y="1.2" width="29.6" height="26.6" rx="3.5" fill="#fbfbfb" stroke="#3c3c3c" stroke-width="1.7"/>
<path d="M5.5,23.5 L13.5,14 L17,18 L22.5,10.5 L27.5,23.5 Z" fill="#4a8ac8"/><circle cx="9" cy="8.2" r="2.2" fill="#4a8ac8"/></svg>
<svg class="b" style="left:16px;top:129px;" width="32" height="34" viewBox="0 0 32 34"><path d="M3,23.8 L15.7,30.6 L28.4,23.8" fill="none" stroke="#666" stroke-width="3" stroke-linejoin="round" stroke-linecap="round"/>
<path d="M3,18 L15.7,24.8 L28.4,18" fill="none" stroke="#666" stroke-width="3" stroke-linejoin="round" stroke-linecap="round"/>
<path d="M15.7,4 L27.8,11.8 L15.7,19.6 L3.6,11.8 Z" fill="#4a8ac8" stroke="#4a8ac8" stroke-width="3" stroke-linejoin="round"/></svg>
<div class="b" style="left:51px;top:135px;width:250px;height:22px;background:#ffffff;border:1px solid #7a7a7a;box-sizing:border-box;"></div>
<svg class="b" style="left:287px;top:142px;" width="10" height="8" viewBox="0 0 10 8"><path d="M1,1.5 L5,5.8 L9,1.5" fill="none" stroke="#444" stroke-width="1.1"/></svg>
<div class="b" style="left:307px;top:135px;width:120px;height:22px;background:#ffffff;border:1px solid #7a7a7a;box-sizing:border-box;"></div>
<svg class="b" style="left:413px;top:142px;" width="10" height="8" viewBox="0 0 10 8"><path d="M1,1.5 L5,5.8 L9,1.5" fill="none" stroke="#444" stroke-width="1.1"/></svg>
<div class="b" style="left:433px;top:135px;width:180px;height:22px;background:#ffffff;border:1px solid #7a7a7a;box-sizing:border-box;"></div>
<svg class="b" style="left:599px;top:142px;" width="10" height="8" viewBox="0 0 10 8"><path d="M1,1.5 L5,5.8 L9,1.5" fill="none" stroke="#444" stroke-width="1.1"/></svg>
<svg class="b" style="left:54px;top:138px;" width="60" height="17" viewBox="0 0 60 17"><ellipse cx="6.5" cy="8.5" rx="5.8" ry="3.6" fill="#b9c6dc"/><circle cx="7.2" cy="8.3" r="2.6" fill="#2f4f8f"/><circle cx="7.8" cy="7.6" r="0.9" fill="#dfe8f5"/><path d="M0.8,7.5 Q6.5,2.8 12.2,7" fill="none" stroke="#55657f" stroke-width="1.2"/>
<path d="M15.2,8.5 V5 Q15.2,1.5 19,1.5 Q22.5,1.5 22.5,5 V6" fill="none" stroke="#c79a1a" stroke-width="2"/><rect x="17.5" y="8" width="11.5" height="8" fill="#e3b52b" stroke="#8a6a0a" stroke-width="0.9"/><path d="M18,10.7 H28.5 M18,13.4 H28.5 M23.2,8 V16" stroke="#8a6a0a" stroke-width="0.7"/>
<circle cx="36.5" cy="8.5" r="5.2" fill="#f7c81e"/><circle cx="36.5" cy="8.5" r="5.2" fill="none" stroke="#f0b010" stroke-width="1.4" stroke-dasharray="2.2 1.9"/>
<rect x="46.7" y="3.7" width="9.6" height="9.6" fill="#fff" stroke="#000" stroke-width="1.3"/></svg>
<div class="t" style="left:121px;top:139.6px;font:normal 11.4px/14px 'Liberation Serif';color:#000;letter-spacing:0px;">0</div>
<svg class="b" style="left:312px;top:140px;" width="12" height="12" viewBox="0 0 12 12"><rect x="1.2" y="1.2" width="9.3" height="9.3" fill="#fff" stroke="#000" stroke-width="1.2"/></svg>
<div class="t" style="left:333px;top:139.2px;font:normal 12.2px/15px 'Liberation Serif';color:#000;letter-spacing:0px;">ByLayer</div>
<div class="b" style="left:437px;top:146px;width:61px;height:1px;background:#000;"></div>
<div class="t" style="left:504.5px;top:139.2px;font:normal 12.2px/15px 'Liberation Serif';color:#000;letter-spacing:0px;">ByLayer</div>
<svg class="b" style="left:616px;top:129px;" width="34" height="33" viewBox="0 0 34 33"><path d="M21,5.5 L26.8,9 L16.8,26 L10.4,27.8 L11.2,22 Z" fill="#f5c211"/><path d="M21,5.5 L22.8,2.4 L28.6,5.9 L26.8,9 Z" fill="#d9362b"/>
<path d="M1,28.5 h3 M7,28.5 h8 M18,28.5 h7.5 M28,28.5 h3" stroke="#5b8ac0" stroke-width="2.6"/></svg>
<div class="b" style="left:304px;top:134px;width:1px;height:26px;background:#d0d0d0;"></div>
<div class="b" style="left:430px;top:134px;width:1px;height:26px;background:#d0d0d0;"></div>
<div class="b" style="left:1px;top:166px;width:82px;height:638px;background:linear-gradient(to right,#ececec,#f8f8f8 60%,#f6f6f6);"></div>
<svg class="b" style="left:7px;top:173px;" width="70" height="3" viewBox="0 0 70 3"><rect x="1" y="0.5" width="2" height="2" fill="#a6a6a6"/><rect x="5" y="0.5" width="2" height="2" fill="#a6a6a6"/><rect x="9" y="0.5" width="2" height="2" fill="#a6a6a6"/><rect x="13" y="0.5" width="2" height="2" fill="#a6a6a6"/><rect x="17" y="0.5" width="2" height="2" fill="#a6a6a6"/><rect x="21" y="0.5" width="2" height="2" fill="#a6a6a6"/><rect x="25" y="0.5" width="2" height="2" fill="#a6a6a6"/><rect x="29" y="0.5" width="2" height="2" fill="#a6a6a6"/><rect x="33" y="0.5" width="2" height="2" fill="#a6a6a6"/><rect x="37" y="0.5" width="2" height="2" fill="#a6a6a6"/><rect x="41" y="0.5" width="2" height="2" fill="#a6a6a6"/><rect x="45" y="0.5" width="2" height="2" fill="#a6a6a6"/><rect x="49" y="0.5" width="2" height="2" fill="#a6a6a6"/><rect x="53" y="0.5" width="2" height="2" fill="#a6a6a6"/><rect x="57" y="0.5" width="2" height="2" fill="#a6a6a6"/><rect x="61" y="0.5" width="2" height="2" fill="#a6a6a6"/><rect x="65" y="0.5" width="2" height="2" fill="#a6a6a6"/></svg>
<svg class="b" style="left:0px;top:167px;" width="84" height="637" viewBox="0 0 84 637"><path d="M10.6,31.5 L15.4,17 H17.2 L22,31.5 M12.6,27 H20" fill="none" stroke="#6e6e6e" stroke-width="2.7"/><path d="M24.2,15.800000000000011 H39 M24.2,23.19999999999999 H39 M24.2,30.5 H39 M9.3,37.400000000000006 H39 M9.3,43.900000000000006 H39" stroke="#2e2e2e" stroke-width="1.5"/><path d="M14.4,58.19999999999999 H33.8 V70 L26,77.80000000000001 H14.4 Z" fill="#d9e6f3"/><path d="M14.6,69 L25.2,58.400000000000006 M14.6,75 L31.2,58.400000000000006 M17.6,77.6 L33.6,61.599999999999994 M23.4,77.6 L33.6,67.4" stroke="#6f9bcc" stroke-width="1.3"/><path d="M13.6,53.19999999999999 V82.6 M34.5,53.19999999999999 V82.6 M9.3,57.599999999999994 H39 M9.3,78.5 H39" stroke="#2e2e2e" stroke-width="1.5"/><path d="M21.4,82.4 L38.8,65.19999999999999" stroke="#2e2e2e" stroke-width="1.5"/><path d="M50,42 L74.5,18" stroke="#2e2e2e" stroke-width="1.5"/><rect x="47.2" y="39.2" width="5.6" height="5.6" fill="#4a8ac8"/><rect x="71.7" y="15.2" width="5.6" height="5.6" fill="#4a8ac8"/><path d="M52,78 L73,57" stroke="#2e2e2e" stroke-width="1.6"/><path d="M77.5,52.5 L74.4,62.1 L67.9,55.6 Z" fill="#6a6a6a"/><path d="M47.0,83.0 L50.1,73.4 L56.6,79.9 Z" fill="#6a6a6a"/><rect x="59.2" y="65.2" width="5.6" height="5.6" fill="#4a8ac8"/><path d="M49,115 H65.5 M65.5,97 Q77,97.5 77,106 Q77,115 65.5,115" fill="none" stroke="#2e2e2e" stroke-width="1.5"/><rect x="46.7" y="112.7" width="4.6" height="4.6" fill="#4a8ac8"/><rect x="63.2" y="112.7" width="4.6" height="4.6" fill="#4a8ac8"/><rect x="63.2" y="94.7" width="4.6" height="4.6" fill="#4a8ac8"/><polygon points="62.0,131.3 76.5,141.8 70.9,158.8 53.1,158.8 47.5,141.8" fill="none" stroke="#2e2e2e" stroke-width="1.5"/><rect x="59.2" y="141.7" width="5.6" height="5.6" fill="#4a8ac8"/><rect x="49.7" y="153.2" width="5.6" height="5.6" fill="#4a8ac8"/><polygon points="60.4,167.5 74,180.60000000000002 69.4,194.2 51.3,195.3 51.3,178.39999999999998" fill="none" stroke="#2e2e2e" stroke-width="1.5"/><rect x="66.8" y="191.2" width="5.6" height="5.6" fill="#4a8ac8"/><rect x="49.5" y="212.5" width="25" height="15.2" fill="none" stroke="#2e2e2e" stroke-width="1.5"/><rect x="71.6" y="209.7" width="5.6" height="5.6" fill="#4a8ac8"/><rect x="46.7" y="224.9" width="5.6" height="5.6" fill="#4a8ac8"/><path d="M49.5,270 Q52.5,251 74,245.7" fill="none" stroke="#2e2e2e" stroke-width="1.5"/><rect x="46.7" y="267.2" width="5.6" height="5.6" fill="#4a8ac8"/><rect x="54.8" y="251.5" width="5.6" height="5.6" fill="#4a8ac8"/><rect x="71.2" y="242.9" width="5.6" height="5.6" fill="#4a8ac8"/><circle cx="62" cy="296" r="14.4" fill="none" stroke="#2e2e2e" stroke-width="1.5"/><path d="M62,296 L68,290.2" stroke="#2e2e2e" stroke-width="1.5"/><path d="M70.2,288.0 L68.9,292.6 L65.6,289.3 Z" fill="#2e2e2e"/><rect x="59.2" y="293.2" width="5.6" height="5.6" fill="#4a8ac8"/><path d="M49.5,321.3 C50,343 62,330 66,331.5 C71,333 74,339 74,346" fill="none" stroke="#2e2e2e" stroke-width="1.5"/><rect x="46.7" y="318.5" width="5.6" height="5.6" fill="#4a8ac8"/><rect x="71.2" y="343.4" width="5.6" height="5.6" fill="#4a8ac8"/><ellipse cx="61.8" cy="372.5" rx="12.3" ry="9" fill="none" stroke="#2e2e2e" stroke-width="1.5"/><rect x="47.1" y="370.0" width="5" height="5" fill="#4a8ac8"/><rect x="59.3" y="361.1" width="5" height="5" fill="#4a8ac8"/><rect x="71.5" y="370.0" width="5" height="5" fill="#4a8ac8"/><path d="M50,409 A12.3,9.6 0 1 1 63.3,418.79999999999995" fill="none" stroke="#2e2e2e" stroke-width="1.5"/><rect x="47.5" y="406.5" width="5" height="5" fill="#4a8ac8"/><rect x="60.8" y="416.3" width="5" height="5" fill="#4a8ac8"/><rect x="58.0" y="445.2" width="7.5" height="7.5" fill="#4a8ac8"/><path d="M60,471.5 H70 L76,477.5 V497 H60 Z" fill="#f4f8fc" stroke="#6a9ad0" stroke-width="1.4"/><path d="M70,471.5 V477.5 H76" fill="none" stroke="#6a9ad0" stroke-width="1.3"/><rect x="50" y="480.5" width="15" height="10.5" fill="none" stroke="#2e2e2e" stroke-width="1.4"/><circle cx="65.5" cy="492" r="8.3" fill="none" stroke="#2e2e2e" stroke-width="1.4"/><path d="M77,494.5 V501.5 H70 Z" fill="#111"/><rect x="47.7" y="488.2" width="4.6" height="4.6" fill="#4a8ac8"/><rect x="51" y="517" width="17" height="11" fill="none" stroke="#2e2e2e" stroke-width="1.4"/><circle cx="67.5" cy="530" r="8.8" fill="none" stroke="#2e2e2e" stroke-width="1.4"/><path d="M66.5,513.5 H75.5 M71,509 V518" stroke="#5a8fc8" stroke-width="1.3"/><rect x="48.7" y="525.2" width="4.6" height="4.6" fill="#4a8ac8"/><path d="M51.5,576 L60.3,547 H65 L73.8,576 M55,566.5 H70.3" fill="none" stroke="#6c6c6c" stroke-width="5"/><rect x="47.8" y="588.5" width="28.5" height="26" rx="3" fill="#f8f8f8" stroke="#3c3c3c" stroke-width="1.6"/><path d="M51,611 L58,601 L62,605.5 L66,601.5 L72.5,611 Z" fill="#666"/><circle cx="70.2" cy="595.3" r="1.9" fill="#555"/><path d="M51,596 V588.5 Q51,586 53.3,586 Q55.6,586 55.6,588.5 V594" fill="none" stroke="#5a8fc8" stroke-width="1.4"/></svg>
<div class="b" style="left:985px;top:166px;width:85px;height:638px;background:linear-gradient(to right,#ffffff,#f7f7f7 8%,#fafafa 28%,#f5f5f5 48%,#f2f2f2);"></div>
<svg class="b" style="left:989px;top:173px;" width="78" height="3" viewBox="0 0 78 3"><rect x="1" y="0.5" width="2" height="2" fill="#a6a6a6"/><rect x="5" y="0.5" width="2" height="2" fill="#a6a6a6"/><rect x="9" y="0.5" width="2" height="2" fill="#a6a6a6"/><rect x="13" y="0.5" width="2" height="2" fill="#a6a6a6"/><rect x="17" y="0.5" width="2" height="2" fill="#a6a6a6"/><rect x="21" y="0.5" width="2" height="2" fill="#a6a6a6"/><rect x="25" y="0.5" width="2" height="2" fill="#a6a6a6"/><rect x="29" y="0.5" width="2" height="2" fill="#a6a6a6"/><rect x="33" y="0.5" width="2" height="2" fill="#a6a6a6"/><rect x="37" y="0.5" width="2" height="2" fill="#a6a6a6"/><rect x="41" y="0.5" width="2" height="2" fill="#a6a6a6"/><rect x="45" y="0.5" width="2" height="2" fill="#a6a6a6"/><rect x="49" y="0.5" width="2" height="2" fill="#a6a6a6"/><rect x="53" y="0.5" width="2" height="2" fill="#a6a6a6"/><rect x="57" y="0.5" width="2" height="2" fill="#a6a6a6"/><rect x="61" y="0.5" width="2" height="2" fill="#a6a6a6"/><rect x="65" y="0.5" width="2" height="2" fill="#a6a6a6"/><rect x="69" y="0.5" width="2" height="2" fill="#a6a6a6"/><rect x="73" y="0.5" width="2" height="2" fill="#a6a6a6"/></svg>
<div class="b" style="left:1027px;top:182px;width:1px;height:622px;background:#bdbdbd;"></div>
<svg class="b" style="left:985px;top:167px;" width="86" height="637" viewBox="0 0 86 637"><path d="M6.7000000000000455,15 V44.5 M35.60000000000002,15 V44.5" stroke="#2e2e2e" stroke-width="1.4"/><path d="M13.2,24.2 L29.1,24.2" stroke="#5a8fc0" stroke-width="1.8"/><path d="M34.3,24.2 L27.8,27.6 L27.8,20.8 Z" fill="#5a8fc0"/><path d="M8.0,24.2 L14.5,20.8 L14.5,27.6 Z" fill="#5a8fc0"/><path d="M6,64 L17.299999999999955,53.5 M24.399999999999977,82.30000000000001 L35.60000000000002,71.5" stroke="#2e2e2e" stroke-width="1.5"/><path d="M15.9,63.0 L25.9,73.1" stroke="#5a8fc0" stroke-width="1.8"/><path d="M29.6,76.8 L22.6,74.6 L27.4,69.8 Z" fill="#5a8fc0"/><path d="M12.2,59.3 L19.2,61.5 L14.4,66.3 Z" fill="#5a8fc0"/><circle cx="21" cy="105.69999999999999" r="14.3" fill="none" stroke="#2e2e2e" stroke-width="1.4"/><path d="M21.5,106.19999999999999 L14,98.5" stroke="#5a8fc0" stroke-width="1.8"/><path d="M11.0,95.5 L18.0,97.7 L13.2,102.5 Z" fill="#5a8fc0"/><circle cx="21" cy="143.89999999999998" r="14.3" fill="none" stroke="#2e2e2e" stroke-width="1.4"/><path d="M14.9,137.7 L27.2,150.1" stroke="#5a8fc0" stroke-width="1.8"/><path d="M30.8,153.8 L23.8,151.6 L28.7,146.8 Z" fill="#5a8fc0"/><path d="M11.3,134.0 L18.3,136.2 L13.4,141.0 Z" fill="#5a8fc0"/><path d="M6,194.60000000000002 H36 M6,189.8 L25.600000000000023,170.39999999999998" stroke="#2e2e2e" stroke-width="1.4"/><path d="M25.5,179 Q30.5,184 30.5,188" fill="none" stroke="#5a8fc0" stroke-width="1.8"/><path d="M22.8,175.0 L29.6,175.8 L25.9,181.1 Z" fill="#5a8fc0"/><path d="M30.8,192.5 L27.4,186.6 L33.8,186.4 Z" fill="#5a8fc0"/><path d="M6,203.5 H36 M6,247.5 H36" stroke="#c8c8c8" stroke-width="1"/><path d="M7,237 L12.799999999999955,216 M30.200000000000045,237 L35.799999999999955,216" stroke="#2e2e2e" stroke-width="1.5"/><path d="M17.0,223.0 L27.2,223.0" stroke="#5a8fc0" stroke-width="1.8"/><path d="M32.4,223.0 L25.9,226.4 L25.9,219.6 Z" fill="#5a8fc0"/><path d="M11.8,223.0 L18.3,219.6 L18.3,226.4 Z" fill="#5a8fc0"/><rect x="6" y="255" width="14" height="14" fill="#606060"/><rect x="23" y="272" width="13.5" height="13.5" fill="#606060"/><rect x="12.5" y="261" width="17.5" height="17.5" fill="#4a8ac8" stroke="#f4f4f4" stroke-width="1"/><rect x="12.5" y="299.5" width="17" height="17" fill="#4a8ac8"/><rect x="6" y="293" width="14" height="14" fill="#606060" stroke="#f4f4f4" stroke-width="1"/><rect x="23" y="309.5" width="13.5" height="13.5" fill="#606060" stroke="#f4f4f4" stroke-width="1"/><rect x="16" y="341" width="20" height="20" fill="#606060"/><rect x="6" y="331.5" width="20" height="20" fill="#4a8ac8" stroke="#f4f4f4" stroke-width="1"/><rect x="6" y="369.5" width="20" height="20" fill="#4a8ac8"/><rect x="16" y="379" width="20" height="20" fill="#606060" stroke="#f4f4f4" stroke-width="1"/><g transform="translate(65.20000000000005,29.80000000000001) rotate(-34) scale(0.93)"><rect x="-16.5" y="-7.5" width="10" height="15" rx="1.5" fill="#f0440f"/><rect x="-6.5" y="-7.5" width="2.8" height="15" fill="#fff6e0"/><rect x="-3.7" y="-7.5" width="20.5" height="15" rx="1.5" fill="#f8c80c"/></g><path d="M49.799999999999955,44.30000000000001 H80.29999999999995" stroke="#5a8fc0" stroke-width="1.4"/><circle cx="56.299999999999955" cy="60" r="6.3" fill="#606060"/><path d="M63,59.5 H70.5 Q73.5,59.5 73.5,62.5 V64" fill="none" stroke="#3a3a3a" stroke-width="1.8"/><path d="M73.5,68.5 L70.1,63.7 L76.9,63.7 Z" fill="#3a3a3a"/><circle cx="75" cy="75.30000000000001" r="6.2" fill="#4a8ac8"/><circle cx="65.5" cy="75.30000000000001" r="6.9" fill="#4a8ac8" stroke="#f6f6f6" stroke-width="1.3"/><g transform="translate(65,106) rotate(0)"><path d="M0,-2.2 H8 V-6.2 L15.2,0 L8,6.2 V2.2 H0 Z" fill="#646464"/></g><g transform="translate(65,106) rotate(90)"><path d="M0,-2.2 H8 V-6.2 L15.2,0 L8,6.2 V2.2 H0 Z" fill="#646464"/></g><g transform="translate(65,106) rotate(180)"><path d="M0,-2.2 H8 V-6.2 L15.2,0 L8,6.2 V2.2 H0 Z" fill="#646464"/></g><g transform="translate(65,106) rotate(270)"><path d="M0,-2.2 H8 V-6.2 L15.2,0 L8,6.2 V2.2 H0 Z" fill="#646464"/></g><circle cx="65" cy="106" r="1.3" fill="#f0f0f0"/><path d="M74.5,153.5 A13.3,13.3 0 1 1 69,133.2" fill="none" stroke="#2e2e2e" stroke-width="1.5"/><path d="M67,138 L77.5,129 L78.5,140 Z" fill="#646464"/><path d="M50.59999999999991,177.5 V167.60000000000002 H79.79999999999995 V196 H69" fill="none" stroke="#2e2e2e" stroke-width="1.5"/><rect x="50" y="182" width="15" height="14.8" rx="1.5" fill="#606060"/><path d="M81,232.5 H58 Q51,232.5 51,225.5 Q51,219 57.5,218.5 V209 H71 V215 H81" fill="none" stroke="#7a7a7a" stroke-width="1.4"/><path d="M81,228.5 H59 Q55,228.5 55,225.5 Q55,222.5 61.5,222.5 V213 H67 V219 H81" fill="none" stroke="#a9b6c4" stroke-width="1.2"/><rect x="50.59999999999991" y="243.8" width="12.6" height="12.6" fill="none" stroke="#2e2e2e" stroke-width="1.4"/><rect x="66.79999999999995" y="243.8" width="12.6" height="12.6" fill="none" stroke="#2e2e2e" stroke-width="1.4"/><rect x="66.79999999999995" y="259.8" width="12.6" height="12.6" fill="none" stroke="#2e2e2e" stroke-width="1.4"/><rect x="50.59999999999991" y="259.8" width="12.6" height="12.6" fill="#f6f9fc" stroke="#9db9d6" stroke-width="1.4"/><path d="M62.799999999999955,284 V310.2 H51 Z" fill="none" stroke="#2e2e2e" stroke-width="1.4"/><path d="M67,282.5 V311 H80 Z" fill="#4a8ac8"/><path d="M51,340.5 C52,325 59,323.5 64.5,332.5 C70,342 77,340 80,331.5" fill="none" stroke="#2e2e2e" stroke-width="1.6"/><path d="M50.59999999999991,380 V386 H79.79999999999995 V357.4 H75" fill="none" stroke="#2e2e2e" stroke-width="1.4"/><path d="M50.59999999999991,380 V357.4 H75" fill="none" stroke="#2e2e2e" stroke-width="1.3" stroke-dasharray="1.6 1.8"/><path d="M50.59999999999991,380 L75,357.4" stroke="#6a9ad0" stroke-width="1.5"/><path d="M50.59999999999991,418 V424.20000000000005 H79.79999999999995 V395.4 H73" fill="none" stroke="#2e2e2e" stroke-width="1.4"/><path d="M50.59999999999991,418 V395.4 H73" fill="none" stroke="#2e2e2e" stroke-width="1.3" stroke-dasharray="1.6 1.8"/><path d="M50.59999999999991,418 Q51.5,396.5 73,395.4" fill="none" stroke="#6a9ad0" stroke-width="1.5"/><path d="M57,459 L63.59999999999991,435" stroke="#2e2e2e" stroke-width="1.7"/><path d="M50.5,447 H57" stroke="#2e2e2e" stroke-width="1.7"/><path d="M64.5,447 H81" stroke="#9db4cc" stroke-width="1.6" stroke-dasharray="5 2.6"/><path d="M52,483 H63" stroke="#2e2e2e" stroke-width="1.5"/><path d="M67.0,483.0 L62.0,485.8 L62.0,480.2 Z" fill="#2e2e2e"/><path d="M50.5,490.79999999999995 H56.5" stroke="#2e2e2e" stroke-width="1.6"/><path d="M59,490.79999999999995 H72" stroke="#9db4cc" stroke-width="1.6" stroke-dasharray="4.5 2.2"/><path d="M74.20000000000005,497.79999999999995 L80,474" stroke="#2e2e2e" stroke-width="1.7"/><path d="M51,519 L61.5,510 H79.5 L68.5,519 Z" fill="#565656"/><rect x="50.5" y="521.8" width="16.8" height="17" fill="#666"/><path d="M69.5,521.5 L79.79999999999995,513 V530.5 L69.5,538.8 Z" fill="#4a8ac8"/><path d="M61,552.6 H53 Q50.59999999999991,552.6 50.59999999999991,555 V571.4 Q50.59999999999991,573.8 53,573.8 H77.40000000000009 Q79.79999999999995,573.8 79.79999999999995,571.4 V555 Q79.79999999999995,552.6 77.40000000000009,552.6 H70" fill="none" stroke="#2e2e2e" stroke-width="1.4"/><rect x="56.9" y="550.1" width="5" height="5" fill="#4a8ac8"/><rect x="68.9" y="550.1" width="5" height="5" fill="#4a8ac8"/><path d="M50.5,600.3 H79.79999999999995" stroke="#2e2e2e" stroke-width="1.5"/><path d="M58,594.3 L65,600.3 L58,606.3 Z M72.20000000000005,594.3 L65.20000000000005,600.3 L72.20000000000005,606.3 Z" fill="#4a8ac8"/></svg>
</body></html>
